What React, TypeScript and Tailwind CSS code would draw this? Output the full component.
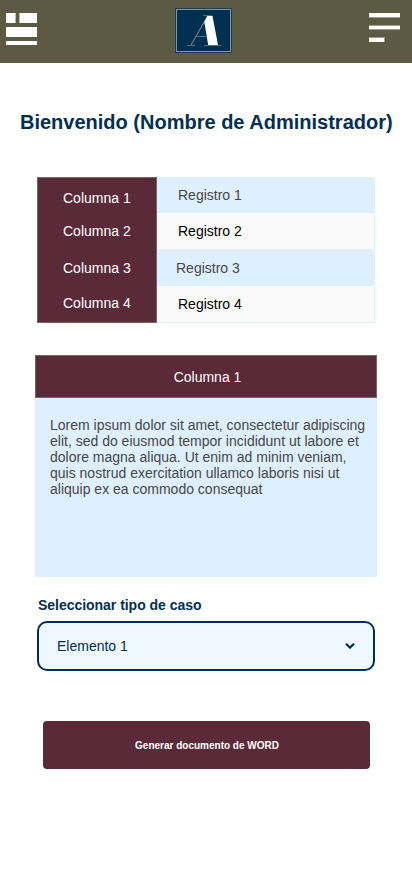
const columns = [
  { label: "Columna 1", style: "h-[40px] pt-[12px]" },
  { label: "Columna 2", style: "h-[35px] pt-[5px]" },
  { label: "Columna 3", style: "h-[36px] pt-[7px]" },
  { label: "Columna 4", style: "h-[32px] pt-[6px]" },
];

const records = [
  { label: "Registro 1", style: "h-[35px] bg-[#deefff] pl-[21px] pt-[9px] text-[#484848]" },
  { label: "Registro 2", style: "h-[36px] bg-[#f9f9f9] pl-[21px] pt-[10px] text-black" },
  { label: "Registro 3", style: "h-[37px] bg-[#deefff] pl-[19px] pt-[11px] text-[#484848]" },
  { label: "Registro 4", style: "h-[36px] bg-[#f9f9f9] pl-[21px] pt-[10px] text-black" },
];

function Header() {
  return (
    <header className="flex h-[63px] items-start justify-between bg-[#5c5a42] pl-[6px] pr-3">
      <svg className="mt-[13px]" width="31" height="32" shapeRendering="crispEdges">
        <path fill="#fff" d="M0 0h9v10H0zM14 0h17v10H14zM0 14h31v10H0zM0 28h31v4H0z" />
        <path fill="#bebdb3" d="M9 0h1v10H9zM13 0h1v10h-1z" />
      </svg>
      <svg className="mt-2 ml-[1px]" width="57" height="45" viewBox="0 0 57 45">
        <rect width="57" height="45" fill="#1d3e50" />
        <rect x="1.5" y="1.5" width="54" height="42" fill="#00304f" stroke="#7f959f" />
        <path d="M28 7.5h9M12 37.5h8M29 37.5h17M20 28.5h11" stroke="#66808f" strokeWidth=".8" />
        <path d="M32 9L16 37" stroke="#66808f" strokeWidth="1.1" />
        <path fill="#fff" d="M32.3 8h5.2L43 37H33.2L29.3 14z" />
      </svg>
      <svg className="mt-[13px]" width="31" height="30" shapeRendering="crispEdges">
        <path fill="#fff" d="M0 0h31v4H0zM0 13h31v3H0zM0 25h15v4H0z" />
        <path fill="#9d9c8e" d="M0 4h31v1H0zM0 12h31v1H0zM0 16h31v1H0zM0 24h16v1H0zM15 25h1v4h-1z" />
      </svg>
    </header>
  );
}

export default function App() {
  return (
    <div className="h-[870px] w-[412px] overflow-hidden bg-white font-['Liberation_Sans',Arial,sans-serif] text-sm leading-4">
      <Header />
      <main className="flex flex-col">
        <h1 className="mt-[47px] ml-5 text-xl leading-6 font-bold whitespace-nowrap text-[#00304f]">
          Bienvenido (Nombre de Administrador)
        </h1>
        <section className="mt-[43px] ml-[37px] flex h-[146px] w-[338px]">
          <div className="w-[120px] border border-[#6e6868] bg-[#5a2a39] pl-[25px] text-white">
            {columns.map((item) => (
              <div key={item.label} className={item.style}>{item.label}</div>
            ))}
          </div>
          <div className="w-[218px] border border-l-0 border-[#deefff]">
            {records.map((item) => (
              <div key={item.label} className={item.style}>{item.label}</div>
            ))}
          </div>
        </section>
        <section className="mt-8 ml-[35px] h-[222px] w-[342px] bg-[#deefff]">
          <h2 className="flex h-[43px] items-center justify-center border border-[#6e6868] bg-[#5a2a39] pl-[3px] text-white">
            Columna 1
          </h2>
          <p className="pt-[19px] pl-[15px] whitespace-nowrap text-[#484848]">
            Lorem ipsum dolor sit amet, consectetur adipiscing<br />
            elit, sed do eiusmod tempor incididunt ut labore et<br />
            dolore magna aliqua. Ut enim ad minim veniam,<br />
            quis nostrud exercitation ullamco laboris nisi ut<br />
            aliquip ex ea commodo consequat
          </p>
        </section>
        <div className="mt-5 ml-[38px] font-bold tracking-[-0.03px] text-[#00304f]">Seleccionar tipo de caso</div>
        <button className="mt-2 ml-[37px] flex h-[50px] w-[338px] items-center justify-between rounded-[10px] border-2 border-[#00304f] bg-[#f0f8ff] pr-[18px] pl-[18px] text-[#00304f]">
          <span>Elemento 1</span>
          <svg width="10" height="6" viewBox="0 0 10 6" fill="none">
            <path d="M1 .8L5 4.6L9 .8" stroke="#00304f" strokeWidth="2.2" />
          </svg>
        </button>
        <button className="mt-[50px] ml-[43px] h-12 w-[327px] rounded bg-[#5a2a39] pt-[2px] pl-px text-[10px] font-bold text-white">
          Generar documento de WORD
        </button>
      </main>
    </div>
  );
}
